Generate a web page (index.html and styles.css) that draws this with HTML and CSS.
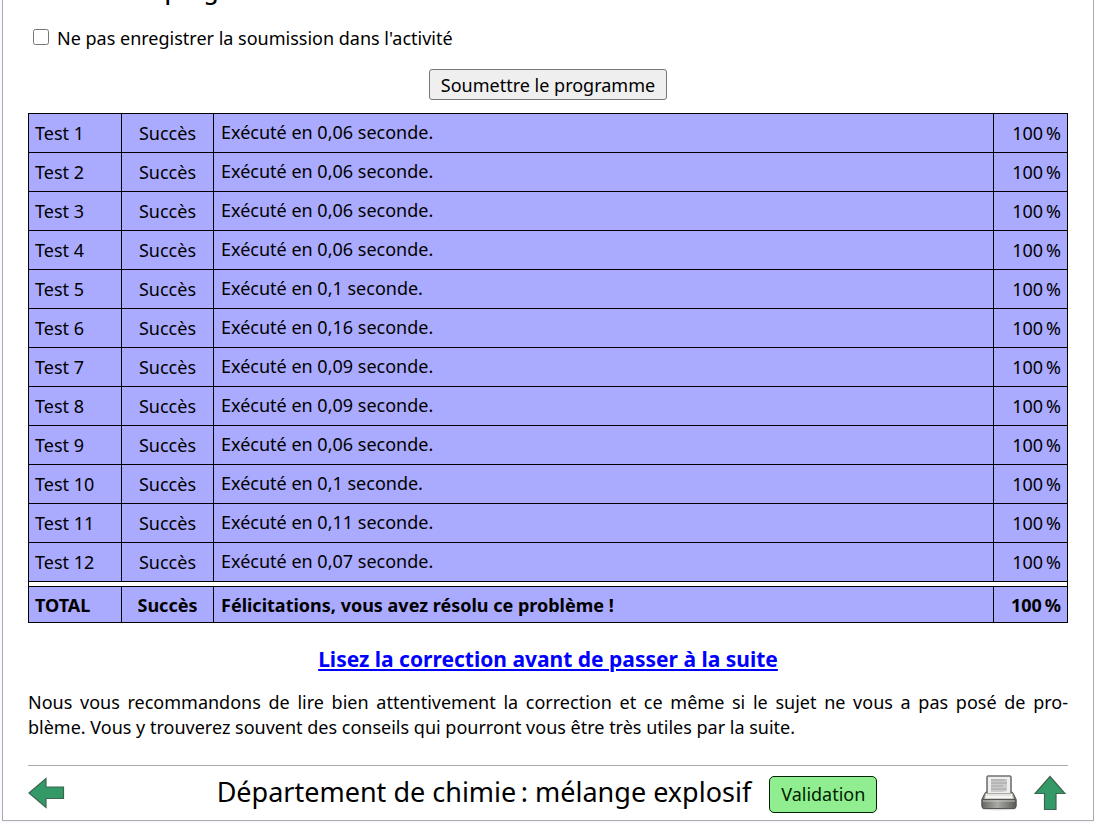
FILE: index.html
```html
<!DOCTYPE html>
<html lang="fr">
<head>
<meta charset="utf-8">
<meta name="viewport" content="width=device-width, initial-scale=1">
<title>Département de chimie : mélange explosif</title>
<link rel="stylesheet" href="styles.css">
</head>
<body>
<main class="page">
  <h2 class="section-title">Envoi du programme</h2>
  <form class="submit-form">
    <div class="option">
      <input type="checkbox" id="no-save">
      <label for="no-save">Ne pas enregistrer la soumission dans l'activité</label>
    </div>
    <button type="button" class="submit">Soumettre le programme</button>
  </form>
  <table class="results">
    <colgroup><col class="col-name"><col class="col-status"><col><col class="col-score"></colgroup>
    <tbody>
      <tr><td>Test 1</td><td class="status">Succès</td><td class="detail">Exécuté en 0,06 seconde.</td><td class="score">100&#8239;%</td></tr>
      <tr><td>Test 2</td><td class="status">Succès</td><td class="detail">Exécuté en 0,06 seconde.</td><td class="score">100&#8239;%</td></tr>
      <tr><td>Test 3</td><td class="status">Succès</td><td class="detail">Exécuté en 0,06 seconde.</td><td class="score">100&#8239;%</td></tr>
      <tr><td>Test 4</td><td class="status">Succès</td><td class="detail">Exécuté en 0,06 seconde.</td><td class="score">100&#8239;%</td></tr>
      <tr><td>Test 5</td><td class="status">Succès</td><td class="detail">Exécuté en 0,1 seconde.</td><td class="score">100&#8239;%</td></tr>
      <tr><td>Test 6</td><td class="status">Succès</td><td class="detail">Exécuté en 0,16 seconde.</td><td class="score">100&#8239;%</td></tr>
      <tr><td>Test 7</td><td class="status">Succès</td><td class="detail">Exécuté en 0,09 seconde.</td><td class="score">100&#8239;%</td></tr>
      <tr><td>Test 8</td><td class="status">Succès</td><td class="detail">Exécuté en 0,09 seconde.</td><td class="score">100&#8239;%</td></tr>
      <tr><td>Test 9</td><td class="status">Succès</td><td class="detail">Exécuté en 0,06 seconde.</td><td class="score">100&#8239;%</td></tr>
      <tr><td>Test 10</td><td class="status">Succès</td><td class="detail">Exécuté en 0,1 seconde.</td><td class="score">100&#8239;%</td></tr>
      <tr><td>Test 11</td><td class="status">Succès</td><td class="detail">Exécuté en 0,11 seconde.</td><td class="score">100&#8239;%</td></tr>
      <tr><td>Test 12</td><td class="status">Succès</td><td class="detail">Exécuté en 0,07 seconde.</td><td class="score">100&#8239;%</td></tr>
    </tbody>
    <tfoot>
      <tr class="spacer"><td colspan="4"></td></tr>
      <tr class="total"><td>TOTAL</td><td class="status">Succès</td><td>Félicitations, vous avez résolu ce problème&nbsp;!</td><td class="score">100&#8239;%</td></tr>
    </tfoot>
  </table>
  <p class="next"><a href="#correction">Lisez la correction avant de passer à la suite</a></p>
  <p class="advice"><span class="full-line">Nous vous recommandons de lire bien attentivement la correction et ce même si le sujet ne vous a pas posé de pro-</span>blème. Vous y trouverez souvent des conseils qui pourront vous être très utiles par la suite.</p>
  <footer class="footer">
    <div class="side">
      <a href="#precedent" class="icon-link" aria-label="Précédent">
        <svg width="37" height="32" viewBox="0 0 37 32"><path d="M1 16 18 1.500V10H35.500V21.500H18V30.500Z" fill="#339966" stroke="#3d6650" stroke-width="1.200"/></svg>
      </a>
    </div>
    <div class="heading">
      <h1 class="title">Département de chimie&#8239;: mélange explosif</h1>
      <span class="badge">Validation</span>
    </div>
    <div class="side tools">
      <a href="#imprimer" class="icon-link" aria-label="Imprimer">
        <svg width="36" height="36" viewBox="0 0 36 36">
          <defs>
            <linearGradient id="tray" x1="0" y1="0" x2="0" y2="1"><stop offset="0" stop-color="#555"/><stop offset="1" stop-color="#a0a09c"/></linearGradient>
            <linearGradient id="base" x1="0" y1="0" x2="1" y2="0"><stop offset="0" stop-color="#666663"/><stop offset=".45" stop-color="#aaaaa6"/><stop offset="1" stop-color="#5a5a57"/></linearGradient>
          </defs>
          <ellipse cx="18" cy="34" rx="17" ry="1.500" fill="#ddd"/>
          <path d="M6 16H30L32 18 35 24V31Q35 33.500 33 33.500H3Q1 33.500 1 31V24L4 18Z" fill="url(#tray)" stroke="#555552"/>
          <path d="M7 1H29L30 2V19H6V2Z" fill="#eee" stroke="#707070" stroke-width="1.600"/>
          <path d="M10 4H26V16L21 17H10Z" fill="#cbcbcb"/>
          <path d="M10 5H24M10 8H26M10 11H22M10 14H25" stroke="#b0b0b0" stroke-width="1.300"/>
          <path d="M4.500 18.500H31.500L32.500 24H3.500Z" fill="#f5f5f2" stroke="#aaa"/>
          <path d="M6 20H30" stroke="#d0d0cc"/>
          <path d="M1 24.500H35V31Q35 33.500 33 33.500H3Q1 33.500 1 31Z" fill="url(#base)" stroke="#555552"/>
          <path d="M2 26H34" stroke="#c4c4c0"/>
        </svg>
      </a>
      <a href="#haut" class="icon-link" aria-label="Haut de page">
        <svg width="32" height="36" viewBox="0 0 32 36"><path d="M16 1.500 31 18.500H22V34.500H10.500V18.500H1Z" fill="#339966" stroke="#3d6650" stroke-width="1.200"/></svg>
      </a>
    </div>
  </footer>
</main>
</body>
</html>
```
FILE: styles.css
```css
* { box-sizing: border-box; }
body {
  margin: 0 0 0 2px;
  background: #f8faff;
  color: #000;
  font: 18px/25px "Noto Sans", sans-serif;
  overflow: hidden;
}
.page {
  margin-top: -25px;
  padding: 0 25px 7px;
  background: #fff;
  border: 1px solid #a9abb0;
}
.section-title {
  margin: 0 0 22px;
  padding-left: 32px;
  font-size: 24px;
  font-weight: 500;
  line-height: 28px;
}
.submit-form { display: flex; flex-direction: column; }
.option { display: flex; align-items: center; gap: 8px; }
.option input { width: 16px; height: 16px; margin: 0 0 3px 5px; }
.submit {
  align-self: center;
  margin: 18px 0 13px;
  padding: 3px 11px 1px;
  font: inherit;
  color: #000;
  background: #efefef;
  border: 1px solid #767676;
  border-radius: 3px;
}
.results {
  width: 100%;
  table-layout: fixed;
  border-collapse: collapse;
}
.col-name { width: 93px; }
.col-status { width: 92px; }
.col-score { width: 74px; }
.results td {
  height: 39px;
  padding: 0 6px;
  background: #aaf;
  border: 1px solid #000;
}
.results .detail { padding-bottom: 2px; }
.results td:nth-child(3) { padding-left: 7px; }
.results .status { text-align: center; }
.results .score { text-align: right; }
.results .spacer td { height: 5px; padding: 0; background: #fff; }
.results .total td { height: 36px; padding-top: 1px; font-weight: bold; }
.next {
  margin: 22px 0 17px;
  font-size: 21px;
  font-weight: bold;
  line-height: 28px;
  text-align: center;
}
.next a { color: #00f; }
.advice { margin: 0 0 25px; text-align: justify; }
.full-line { display: block; text-align-last: justify; }
.footer {
  display: flex;
  align-items: center;
  justify-content: space-between;
  padding-top: 6px;
  border-top: 1px solid #aaa;
}
.side { display: flex; flex: 1; }
.heading { display: flex; align-items: center; gap: 18px; }
.title { margin: 0 0 2px; font-size: 27px; font-weight: normal; line-height: 36px; }
.badge {
  margin-top: 4px;
  padding: 5px 11px;
  background: #90ee90;
  color: #020;
  border: 1px solid #020;
  border-radius: 5px;
}
.tools { align-items: center; justify-content: flex-end; gap: 17px; padding-right: 2px; }
.icon-link { display: flex; }
```
